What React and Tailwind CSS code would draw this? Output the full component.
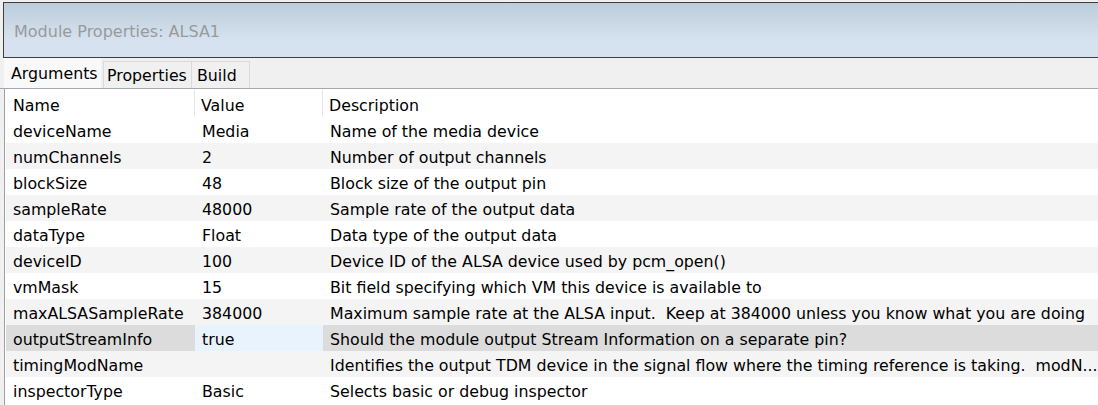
import React from "react"

const rows = [
  ["deviceName", "Media", "Name of the media device"],
  ["numChannels", "2", "Number of output channels"],
  ["blockSize", "48", "Block size of the output pin"],
  ["sampleRate", "48000", "Sample rate of the output data"],
  ["dataType", "Float", "Data type of the output data"],
  ["deviceID", "100", "Device ID of the ALSA device used by pcm_open()"],
  ["vmMask", "15", "Bit field specifying which VM this device is available to"],
  ["maxALSASampleRate", "384000", "Maximum sample rate at the ALSA input.  Keep at 384000 unless you know what you are doing"],
  ["outputStreamInfo", "true", "Should the module output Stream Information on a separate pin?"],
  ["timingModName", "", "Identifies the output TDM device in the signal flow where the timing reference is taking.  modN..."],
  ["inspectorType", "Basic", "Selects basic or debug inspector"],
]

export default function App() {
  return (
    <div className="relative h-[405px] w-[1098px] overflow-hidden bg-[#f0f0f0] pt-[2px] font-['DejaVu_Sans',sans-serif] text-[15.8px] text-black">
      <div className="ml-[3px] flex h-[56px] items-center border-y border-l border-[#3f3f3f] bg-gradient-to-b from-[#bdcddc] via-[#d6e2ef] via-70% to-[#d6e2ef] pl-[10px] pt-[4px]">
        <span className="text-[16px] text-[#9a9a9a]">Module Properties: ALSA1</span>
      </div>

      <div className="flex h-[31px] items-end border-b border-[#a3a8ae] pl-[4px]">
        <div className="flex h-[30px] w-[97px] items-center bg-[#f9f9f9] pl-[7px] pt-[2px] leading-none">Arguments</div>
        <div className="ml-[2px] flex h-[27px] w-[89px] items-center border border-b-0 border-[#dadada] bg-[#f0f0f0] pl-[3px] pt-[2px] leading-none">Properties</div>
        <div className="flex h-[27px] w-[58px] items-center border border-b-0 border-l-0 border-[#dadada] bg-[#f0f0f0] pl-[5px] pt-[2px] leading-none">Build</div>
      </div>

      <div className="ml-[4px] h-[320px] border-l border-[#a0a0a0] bg-white pl-[1px] pt-[1px]">
        <div className="flex h-[27px] items-center">
          <div className="flex h-full w-[189px] items-center border-r border-[#e5e5e5] pl-[7px] pt-[4px]">Name</div>
          <div className="flex h-full w-[128px] items-center border-r border-[#e5e5e5] pl-[6px] pt-[4px]">Value</div>
          <div className="flex h-full items-center pl-[6px] pt-[4px]">Description</div>
        </div>
        {rows.map((r, i) => {
          const selected = r[0] === "outputStreamInfo"
          const stripe = i % 2 === 1 ? "bg-[#f4f4f4]" : "bg-white"
          return (
            <div
              key={r[0]}
              className={
                "flex h-[26px] items-center whitespace-pre " + (selected ? "bg-[#dcdcdc]" : stripe)
              }
            >
              <div className="flex h-full w-[189px] items-center pl-[7px] pt-[4px]">{r[0]}</div>
              <div
                className={
                  "flex h-full w-[128px] items-center pl-[7px] pt-[4px] " + (selected ? "bg-[#e9f3fd]" : "")
                }
              >
                {r[1]}
              </div>
              <div className="flex h-full items-center pl-[7px] pt-[4px]">{r[2]}</div>
            </div>
          )
        })}
      </div>
    </div>
  )
}
